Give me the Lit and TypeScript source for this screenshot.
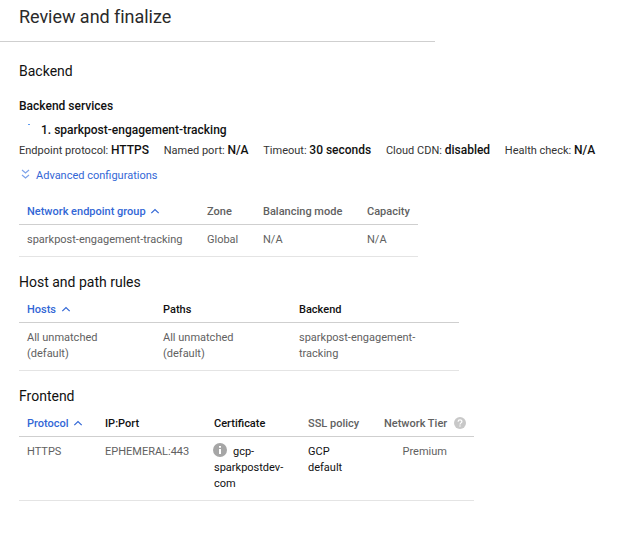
import { LitElement, html, css } from "lit";
import { customElement } from "lit/decorators.js";

const caret = html`<svg class="caret" width="10" height="8" viewBox="0 0 10 8">
  <path d="M1.3 6.2 L5 2.5 L8.7 6.2" fill="none" stroke="currentColor" stroke-width="1.2" />
</svg>`;

const facts: [string, string][] = [
  ["Endpoint protocol", "HTTPS"],
  ["Named port", "N/A"],
  ["Timeout", "30 seconds"],
  ["Cloud CDN", "disabled"],
  ["Health check", "N/A"],
];

@customElement("app-root")
export class AppRoot extends LitElement {
  static styles = css`
    :host {
      display: block;
      height: 539px;
      overflow: hidden;
      background: #fff;
      color: #111;
      font: 11px/16px Roboto, sans-serif;
    }
    svg { display: block; flex: none; }
    .title {
      box-sizing: border-box;
      width: 435px;
      height: 42px;
      margin: 0;
      padding: 5px 19px 0;
      border-bottom: 1px solid #cfcfcf;
      font-size: 18px;
      line-height: 24px;
      font-weight: 400;
      letter-spacing: -0.04px;
      color: #2a2a2a;
    }
    main { padding-left: 19px; }
    h2 {
      margin: 0;
      font-size: 14px;
      line-height: 20px;
      font-weight: 400;
      color: #111;
    }
    .backend { padding-top: 19px; }
    h3 { margin: 17px 0 0; font-size: 12px; line-height: 16px; font-weight: 500; letter-spacing: 0; }
    .service { display: flex; margin-top: 8px; height: 16px; font-size: 12px; font-weight: 500; }
    .dot { width: 2px; height: 1px; margin: 2px 11px 0 9px; background: #5f9bf0; }
    .facts { display: flex; gap: 14.7px; margin-top: 4px; white-space: nowrap; color: #333; }
    .facts b { font-size: 12px; font-weight: 500; color: #111; }
    .advanced { display: flex; gap: 6px; margin-top: 9px; padding-left: 2px; color: #3367d6; }
    .advanced svg { margin-top: 1px; }
    .table { color: #616161; }
    .row { display: grid; box-sizing: border-box; padding: 7px 0 8px 8px; border-bottom: 1px solid #e4e4e4; }
    .head { height: 26px; padding: 5px 0 4px 8px; border-color: #cfcfcf; font-weight: 500; }
    .groups { width: 399px; margin-top: 15px; }
    .groups .row { grid-template-columns: 180px 56px 104px auto; }
    .rules-title { margin-top: 15px; }
    .rules { width: 440px; margin-top: 5px; }
    .rules .row { grid-template-columns: 136px 136px auto; }
    .front-title { margin-top: 15px; }
    .front { width: 455px; margin-top: 5px; }
    .front .row { grid-template-columns: 78px 109px 94px 76px auto; }
    .sorted { display: flex; gap: 4.5px; color: #3367d6; }
    .caret { margin-top: 3px; }
    .dark { color: #111; }
    .tier { display: flex; gap: 7px; white-space: nowrap; }
    .tier svg { margin-top: 1px; }
    .premium { padding-left: 18.5px; }
    .cert { display: flex; gap: 6px; margin-left: -1px; }
    .cert svg { margin-top: -1px; }
  `;

  render() {
    return html`
      <h1 class="title">Review and finalize</h1>
      <main>
        <h2 class="backend">Backend</h2>
        <h3>Backend services</h3>
        <div class="service"><span class="dot"></span><span>1. sparkpost-engagement-tracking</span></div>
        <div class="facts">
          ${facts.map(([k, v]) => html`<span>${k}: <b>${v}</b></span>`)}
        </div>
        <div class="advanced">
          <svg width="9" height="11" viewBox="0 0 9 11">
            <path d="M1 1 L4.5 4 L8 1 M1 6 L4.5 9 L8 6" fill="none" stroke="#7da2ea" stroke-width="1.2" />
          </svg>
          <span>Advanced configurations</span>
        </div>

        <div class="table groups">
          <div class="row head">
            <span class="sorted">Network endpoint group ${caret}</span>
            <span>Zone</span><span>Balancing mode</span><span>Capacity</span>
          </div>
          <div class="row">
            <span>sparkpost-engagement-tracking</span><span>Global</span><span>N/A</span><span>N/A</span>
          </div>
        </div>

        <h2 class="rules-title">Host and path rules</h2>
        <div class="table rules">
          <div class="row head">
            <span class="sorted">Hosts ${caret}</span>
            <span class="dark">Paths</span><span class="dark">Backend</span>
          </div>
          <div class="row">
            <span>All unmatched<br />(default)</span>
            <span>All unmatched<br />(default)</span>
            <span>sparkpost-engagement-<br />tracking</span>
          </div>
        </div>

        <h2 class="front-title">Frontend</h2>
        <div class="table front">
          <div class="row head">
            <span class="sorted">Protocol ${caret}</span>
            <span class="dark">IP:Port</span><span class="dark">Certificate</span><span>SSL policy</span>
            <span class="tier">Network Tier
              <svg width="12" height="12" viewBox="0 0 12 12">
                <circle cx="6" cy="6" r="6" fill="#c8c8c8" />
                <path d="M4.1 4.7 C4.1 2.3 7.9 2.3 7.9 4.6 C7.9 5.9 6 5.9 6 7.4" fill="none" stroke="#fff" stroke-width="1.2" />
                <rect x="5.4" y="8.4" width="1.2" height="1.2" fill="#fff" />
              </svg>
            </span>
          </div>
          <div class="row">
            <span>HTTPS</span><span>EPHEMERAL:443</span>
            <div class="dark">
              <div class="cert">
                <svg width="14" height="14" viewBox="0 0 14 14">
                  <circle cx="7" cy="7" r="7" fill="#a6a6a6" />
                  <path d="M6 3h2v1.8H6z M6 6h2v5H6z" fill="#fff" />
                </svg>
                <span>gcp-</span>
              </div>
              sparkpostdev-<br />com
            </div>
            <span class="dark">GCP<br />default</span>
            <span class="premium">Premium</span>
          </div>
        </div>
      </main>
    `;
  }
}
